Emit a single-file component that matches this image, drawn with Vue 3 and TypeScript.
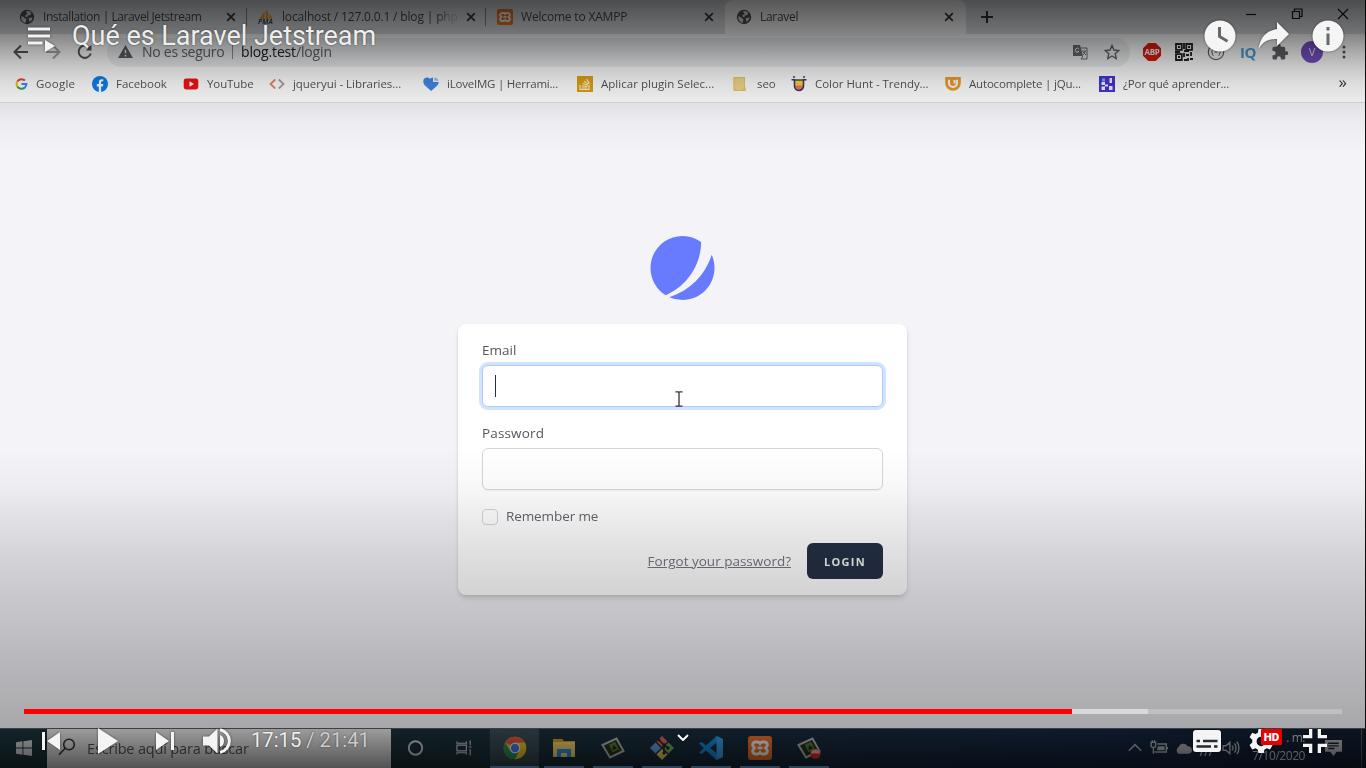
<script setup lang="ts">
interface Tab { icon: string; title: string; active?: boolean; spacing: string; badge?: string }
interface Bookmark { icon: string; label: string; spacing: string }
interface Extension { icon: string; text?: string }

const tabs: Tab[] = [
  { icon: 'globe', title: 'Installation | Laravel Jetstream', spacing: '-0.42px' },
  { icon: 'pma', title: 'localhost / 127.0.0.1 / blog | php', spacing: '-0.16px', badge: 'PMA' },
  { icon: 'xampp', title: 'Welcome to XAMPP', spacing: '-0.18px' },
  { icon: 'globe', title: 'Laravel', active: true, spacing: '-0.3px' },
]

const bookmarks: Bookmark[] = [
  { icon: 'google', label: 'Google', spacing: '0.25px' },
  { icon: 'facebook', label: 'Facebook', spacing: '-0.05px' },
  { icon: 'youtube', label: 'YouTube', spacing: '-0.1px' },
  { icon: 'code', label: 'jqueryui - Libraries...', spacing: '-0.04px' },
  { icon: 'heart', label: 'iLoveIMG | Herrami...', spacing: '-0.22px' },
  { icon: 'stack', label: 'Aplicar plugin Selec...', spacing: '0.03px' },
  { icon: 'folder', label: 'seo', spacing: '-0.1px' },
  { icon: 'hunt', label: 'Color Hunt - Trendy...', spacing: '-0.04px' },
  { icon: 'cup', label: 'Autocomplete | jQu...', spacing: '-0.18px' },
  { icon: 'hack', label: '¿Por qué aprender...', spacing: '-0.14px' },
]

const extensions: Extension[] = [
  { icon: 'abp', text: 'ABP' },
  { icon: 'qr' },
  { icon: 'json' },
  { icon: 'iq', text: 'IQ' },
  { icon: 'puzzle' },
  { icon: 'avatar', text: 'V' },
  { icon: 'dots' },
]
const apps: string[] = ['chrome', 'explorer', 'camtasia', 'git', 'vscode', 'xampp', 'recorder']

const played = 1048
const loaded = 1124
</script>

<template>
  <svg class="sprite" aria-hidden="true">
    <symbol id="globe" viewBox="0 0 16 16">
      <circle cx="8" cy="8" r="7.200" fill="#4d5156" />
      <path d="M2.200 7.200c1.800.2 3 .9 3.400 2.100 1.600 0 2 .9 1.600 2.200l-.8 2.400C3.800 13.200 2 10.800 2.200 7.200zM7 2.200c1.800-.6 4.200.1 5.400 1.600l-1 2.300-2.400.4-.6 1.700-2.300-.6.3-1.700 2-.7z" fill="#dcdee2" />
      <path d="M9.500 9.200l3.900-1-.7 3-2.200 1.500z" fill="#dcdee2" />
    </symbol>
    <symbol id="pma" viewBox="0 0 16 16">
      <path d="M1.500 10L6.500 2.500V10zM7.500 10l.5-9.500c2 2 3 5.500 2.500 9.500zM11.500 10V5c1.500 1 2.500 3 2.500 5z" fill="#f59a22" />
    </symbol>
    <symbol id="xampp" viewBox="0 0 24 24">
      <rect width="24" height="24" rx="3" fill="#f4752b" />
      <path d="M7.500 6h2.200c1 0 1.700.7 2.300 1.500.6-.8 1.300-1.500 2.300-1.500h2.200a2.800 2.800 0 0 1 2.300 4.400l-1.300 1.600 1.300 1.600a2.800 2.800 0 0 1-2.300 4.400h-2.200c-1 0-1.700-.7-2.300-1.500-.6.8-1.300 1.500-2.300 1.500H7.500a2.800 2.800 0 0 1-2.300-4.400L6.500 12l-1.300-1.600A2.800 2.800 0 0 1 7.500 6z" fill="none" stroke="#fff" stroke-width="2.900" />
      <path d="M9.500 12h5" stroke="#fff" stroke-width="2.600" />
    </symbol>
    <symbol id="google" viewBox="0 0 16 16">
      <g fill="none" stroke-width="2.500">
        <path d="M3 4.800A6 6 0 0 1 12.200 3.700" stroke="#e94335" />
        <path d="M3.100 11.400a6 6 0 0 1 0-6.800" stroke="#fbbc05" />
        <path d="M12.100 12.400A6 6 0 0 1 3 11.200" stroke="#34a853" />
        <path d="M8 8h6a6 6 0 0 1-2.100 4.600" stroke="#4285f4" />
      </g>
    </symbol>
    <symbol id="facebook" viewBox="0 0 16 16">
      <circle cx="8" cy="8" r="8" fill="#0b7fee" />
      <path d="M6.800 16v-5.500h-2V8.100h2V6.400c0-2.100 1.200-3.200 3-3.200.8 0 1.500.1 1.500.1v2h-.9c-1 0-1.300.6-1.300 1.200v1.600h2.200l-.4 2.400H9.100V16z" fill="#fff" />
    </symbol>
    <symbol id="youtube" viewBox="0 0 16 16">
      <rect x=".7" y="2.500" width="14.600" height="11" rx="2.400" fill="#f31313" />
      <path d="M6.500 5.300v5.400L11 8z" fill="#fff" />
    </symbol>
    <symbol id="code" viewBox="0 0 16 16">
      <g fill="none" stroke-width="1.800"><path d="M6.200 3.500L1.500 8l4.700 4.500" stroke="#e58768" /><path d="M9.800 3.500L14.500 8l-4.700 4.500" stroke="#a9a4a2" /></g>
    </symbol>
    <symbol id="heart" viewBox="0 0 16 16">
      <path d="M.3 5C.3 1.500 4.500.2 7 2.800c1-.9 1.800-1.300 3-1.400v4.500h5.700c-.2 2.200-1.300 3.500-2.600 4.600L8.200 15 2.500 10C1 8.600.3 7 .3 5z" fill="#4187ea" />
      <path d="M11.300 1.500c2.200.2 3.800 1.400 4.100 3.300h-4.100z" fill="#9cbff5" />
    </symbol>
    <symbol id="stack" viewBox="0 0 16 16">
      <rect width="16" height="16" fill="#dda211" />
      <path d="M3 9v4.500h9V9M4.800 12h5.500M4.900 9.900l5.500.6M5.500 7.500l5.300 1.700M7 5.200l4.400 3.100M9.500 3.200l3 4.500" fill="none" stroke="#fff3cf" stroke-width="1.200" />
    </symbol>
    <symbol id="folder" viewBox="0 0 16 16">
      <path d="M.5 1h11v10l1 .5V15H.5z" fill="#efd88a" /><path d="M10.500 11.500h2V15h-2z" fill="#e9bd49" /><path d="M1 1.500h10.500V14.500H1z" fill="none" stroke="#e9c661" />
    </symbol>
    <symbol id="hunt" viewBox="0 0 16 16">
      <path d="M3 4h10v5.500a5 5 0 0 1-10 0z" fill="#f6d72f" /><path d="M3.500 9.500h9L11 14H5z" fill="#f27368" />
      <path d="M.5 3.800h3V10a4.500 4.500 0 0 0 9 0V3.800h3" fill="none" stroke="#403b5b" stroke-width="1.600" />
      <path d="M3 4h10" stroke="#403b5b" stroke-width="1.400" />
      <circle cx="3" cy="1" r="1" fill="#403b5b" /><circle cx="13" cy="1" r="1" fill="#403b5b" />
    </symbol>
    <symbol id="cup" viewBox="0 0 16 16">
      <path d="M.2 1h15.600v6a7.800 7.800 0 0 1-15.600 0z" fill="#ee9b2d" />
      <path d="M4 3.800V7a4 4 0 0 0 8 0V3.800" fill="none" stroke="#fff" stroke-width="2" />
      <path d="M8.500 4h2v3.500h-2z" fill="#fff" />
    </symbol>
    <symbol id="hack" viewBox="0 0 16 16">
      <path d="M0 0h16v16H0z" fill="#4a32d4" />
      <path d="M2.500 6h3.500v3H2.500zM2.500 10.500H6V14H2.500zM10.500 2H13v5h-2.500zM6 8.500h3v2H6zM10 10h3.500v4H10z" fill="#f2f1ff" /><path d="M3 2.500h3v3H3z" fill="#60bedb" />
    </symbol>
    <symbol id="abp" viewBox="0 0 18 18"><path d="M5.300 0h7.400L18 5.300v7.400L12.700 18H5.300L0 12.700V5.300z" fill="#dc1c13" /></symbol>
    <symbol id="qr" viewBox="0 0 18 18">
      <g fill="none" stroke="#202124" stroke-width="1.800"><path d="M1 1h5.800v5.800H1zM11.200 1H17v5.800h-5.800zM1 11.200h5.800V17H1z" /><path d="M9 0v6M9 8h5M0 9h5M9 10v4M11 12h3M16 9v4M9 17h3M13 15v3M15 16h3" /></g>
      <path d="M3 3h2v2H3zM13 3h2v2h-2zM3 13h2v2H3z" fill="#202124" />
    </symbol>
    <symbol id="json" viewBox="0 0 18 18">
      <circle cx="9" cy="9" r="7.700" fill="none" stroke="#5f6368" stroke-width="1.200" /><path d="M6.500 5.500c-2 0-.4 2.500-2 3.500 1.600 1 0 3.500 2 3.500M11.500 5.500c2 0 .4 2.500 2 3.500-1.600 1 0 3.500-2 3.500M7.500 9h3" fill="none" stroke="#5f6368" />
    </symbol>
    <symbol id="puzzle" viewBox="0 0 24 24">
      <path d="M20.500 11H19V7a2 2 0 0 0-2-2h-4V3.500a2.500 2.500 0 0 0-5 0V5H4a2 2 0 0 0-2 2v3.800h1.500a2.700 2.700 0 0 1 0 5.400H2V20c0 1.100.9 2 2 2h3.800v-1.500a2.700 2.700 0 0 1 5.400 0V22H17a2 2 0 0 0 2-2v-4h1.500a2.500 2.500 0 0 0 0-5z" fill="#5f6368" />
    </symbol>
    <symbol id="avatar" viewBox="0 0 18 18"><circle cx="9" cy="9" r="9" fill="#764fc2" /></symbol>
    <symbol id="dots" viewBox="0 0 18 18"><g fill="#55585c"><circle cx="9" cy="4" r="1.500" /><circle cx="9" cy="9" r="1.500" /><circle cx="9" cy="14" r="1.500" /></g></symbol>
    <symbol id="chrome" viewBox="0 0 24 24">
      <circle cx="12" cy="12" r="11.300" fill="#f7c92e" />
      <path d="M12 12L2.200 6.300A11.300 11.300 0 0 1 21.800 6.500H12z" fill="#ed5546" /><path d="M2.200 6.300l5 8.500L12 17l-.5 6.300A11.300 11.300 0 0 1 2.200 6.300z" fill="#249a58" />
      <path d="M7 14.500l5 2 4-1.300-4 8.100h-1z" fill="#249a58" /><circle cx="12" cy="12" r="5.300" fill="#fff" /><circle cx="12" cy="12" r="4.200" fill="#4383ed" />
    </symbol>
    <symbol id="explorer" viewBox="0 0 24 24">
      <path d="M1 3h9l2 2h11v16H1z" fill="#d9a322" /><path d="M1 6h22v15H1z" fill="#ffdc70" /><path d="M5 13h14v8h-4v-4H9v4H5z" fill="#3695df" />
    </symbol>
    <symbol id="camtasia" viewBox="0 0 24 24">
      <path d="M1.500 9L15.500 2.500l7 12.500L9 21.500z" fill="#26331c" stroke="#bcbcbc" stroke-width="2" /><path d="M8 8.500l6-2.700 4 7.500-6.500 3z" fill="#607d3a" /><path d="M12 9l4 3-4.500 2.500z" fill="#1e2818" />
    </symbol>
    <symbol id="git" viewBox="0 0 24 24">
      <path d="M12 0l5.500 5.500L12 11 6.500 5.500z" fill="#e86657" /><path d="M5.500 6.500L11 12l-5.500 5.500L0 12z" fill="#6ca4e7" /><path d="M18.500 6.500L24 12l-5.500 5.500L13 12z" fill="#78b957" /><path d="M12 13l5.500 5.500L12 24l-5.500-5.500z" fill="#f1d066" />
      <path d="M9 4l5 5v8M14 9l4 3" fill="none" stroke="#242b32" stroke-width="1.600" /><g fill="#242b32"><circle cx="9" cy="4" r="1.600" /><circle cx="14" cy="9" r="1.700" /><circle cx="18" cy="12" r="1.700" /><circle cx="14" cy="17" r="1.700" /></g>
    </symbol>
    <symbol id="vscode" viewBox="0 0 24 24">
      <path d="M17.500 0L24 3v18l-6.500 3L7 14.500 2.500 18 0 16.500 4.800 12 0 7.500 2.500 6 7 9.500zM18 6.500L11 12l7 5.500z" fill="#168ce0" fill-rule="evenodd" /><path d="M17.500 0L24 3v18l-6.500 3z" fill="#36a5ed" />
    </symbol>
    <symbol id="recorder" viewBox="0 0 24 24"><use href="#camtasia" /><circle cx="18.500" cy="18" r="5" fill="#ef2c25" /><path d="M13.600 17.500a5 5 0 0 1 9.800 0z" fill="#f5b6ad" /></symbol>
  </svg>

  <main class="screen">
    <section class="desktop">
      <header class="tabs">
        <div v-for="tab in tabs" :key="tab.title" class="tab" :class="{ active: tab.active }">
          <span class="tab-icon"><svg><use :href="'#' + tab.icon" /></svg><small v-if="tab.badge">{{ tab.badge }}</small></span>
          <span class="tab-title" :class="{ fade: tab.badge }" :style="{ letterSpacing: tab.spacing }">{{ tab.title }}</span>
          <svg class="close" viewBox="0 0 10 10"><path d="M1.200 1.200l7.600 7.600m0-7.600L1.200 8.800" /></svg>
        </div>
        <svg class="plus" viewBox="0 0 12 12"><path d="M6 0v12M0 6h12" /></svg>
        <div class="window-controls">
          <svg viewBox="0 0 12 12"><path d="M1 6.500h10" /></svg>
          <svg viewBox="0 0 12 12"><path d="M1.500 3.500h7v7h-7zM3.500 3V1h7.500v7.500H9" /></svg>
          <svg viewBox="0 0 12 12"><path d="M1 1l10 10m0-10L1 11" /></svg>
        </div>
      </header>

      <div class="toolbar">
        <nav class="nav">
          <svg viewBox="0 0 16 16"><path d="M15 8H2M8 1.500L1.500 8 8 14.500" /></svg>
          <svg class="dim" viewBox="0 0 16 16"><path d="M1 8h13M8 1.500L14.500 8 8 14.500" /></svg>
          <svg viewBox="0 0 16 16"><path d="M13.800 9.500A6.200 6.200 0 1 1 12.500 3.500" /><path d="M14.500.8v5.700H8.800z" class="solid" /></svg>
        </nav>
        <div class="address">
          <svg class="warn" viewBox="0 0 16 14"><path d="M8 0l8 14H0z" fill="#5a5e62" /><path d="M8 5v4M8 10.500v1.800" stroke="#eee" stroke-width="1.500" /></svg>
          <span class="unsafe">No es seguro</span><i /><span class="url">blog.test<em>/login</em></span>
          <svg class="translate" viewBox="0 0 16 16"><path d="M1 1h7l3 11H1z" fill="#66696c" /><path d="M8.500 4H15v11H9l2-3" fill="none" stroke="#66696c" /><path d="M6.800 5a2 2 0 1 0 0 2.500H5.300" stroke="#eee" fill="none" /><path d="M10 7h4M13 7c0 2-1 3-2 4M11 8l3 3" stroke="#66696c" fill="none" /></svg>
          <svg class="star" viewBox="0 0 16 16"><path d="M8 1.500l2 4.500 4.800.5-3.600 3.300 1 4.700L8 12l-4.200 2.500 1-4.700L1.200 6.500 6 6z" /></svg>
        </div>
        <div class="extensions">
          <span v-for="item in extensions" :key="item.icon" :class="item.icon"><svg><use :href="'#' + item.icon" /></svg><small v-if="item.text">{{ item.text }}</small></span>
        </div>
      </div>

      <nav class="bookmarks">
        <span v-for="item in bookmarks" :key="item.label" class="bookmark">
          <svg><use :href="'#' + item.icon" /></svg><b :style="{ letterSpacing: item.spacing }">{{ item.label }}</b>
        </span>
        <span class="more">»</span>
      </nav>

      <div class="page">
        <svg class="logo" viewBox="0 0 48 48"><path d="M11.395 44.428C4.557 40.198 0 32.632 0 24 0 10.745 10.745 0 24 0a23.891 23.891 0 0113.997 4.502c-.2 17.907-11.097 33.245-26.602 39.926z" /><path d="M14.134 45.885A23.914 23.914 0 0024 48c13.255 0 24-10.745 24-24 0-3.516-.756-6.856-2.115-9.866-4.659 15.143-16.608 27.092-31.75 31.751z" /></svg>
        <form class="card" @submit.prevent>
          <label>Email</label>
          <div class="field focused"><span class="caret" />
            <svg class="pointer" viewBox="0 0 8 16"><path d="M.5.8h2.700L4 1.500 4.800.8h2.700M4 1.500v13M.5 15.200h2.700l.8-.7.8.7h2.700" /></svg>
          </div>
          <label class="second">Password</label>
          <div class="field" />
          <div class="remember"><span class="box" /><span>Remember me</span></div>
          <div class="actions"><a>Forgot your password?</a><button>LOGIN</button></div>
        </form>
      </div>

      <footer class="taskbar">
        <div class="start"><svg viewBox="0 0 16 16"><path d="M0 2.200l6.500-.9v6.200H0zM7.400 1.200L16 0v7.500H7.400zM0 8.400h6.500v6.300L0 13.800zM7.400 8.400H16V16l-8.600-1.200z" /></svg></div>
        <div class="search"><svg viewBox="0 0 18 18"><circle cx="11" cy="6.500" r="5.300" /><path d="M7.200 10.300L1 16.800" /></svg><span>Escribe aquí para buscar</span></div>
        <div class="system"><svg viewBox="0 0 16 16"><circle cx="8" cy="8" r="6.700" stroke-width="1.900" /></svg></div>
        <div class="system"><svg viewBox="0 0 18 16"><path d="M1 1v2h10V1M1 15v-2h10v2M1 5h10v6H1zM15 0v5M15 9v7M13.500 7h3" stroke-width="1.200" /></svg></div>
        <div class="apps"><div v-for="app in apps" :key="app" class="app" :class="app"><svg><use :href="'#' + app" /></svg></div></div>
        <div class="tray">
          <svg viewBox="0 0 16 16"><path d="M2.500 10.500L8 5l5.500 5.500" /></svg>
          <svg viewBox="0 0 16 16"><path d="M6.500 4.500h8v7H4M1 3v3c0 2 4 2 4 0V3zM2 1v2M4 1v2M3 8v5M15.500 7v2" /><path d="M7 6.500h6v3.500H6z" fill="#aeb2b5" stroke="none" /></svg>
          <svg viewBox="0 0 16 16"><path d="M4 13a3.500 3.500 0 0 1 0-6 4.500 4.500 0 0 1 8-.5c3 0 4 2 4 3.500s-1 3-3 3z" fill="#aeb2b5" stroke="none" /></svg>
          <svg viewBox="0 0 16 16"><path d="M2 15l2-5M6 15l2-5M10 15l2-5" /></svg>
          <svg viewBox="0 0 16 16"><path d="M1 6h2.500L7 3v10l-3.500-3H1zM9 6c1 1 1 3 0 4M11 4c2 2 2 6 0 8M13.200 2.500c2.500 3 2.500 8 0 11" /></svg>
          <div class="clock"><span>. m.</span><span>7/10/2020</span></div>
          <svg class="note" viewBox="0 0 16 16"><path d="M0 1h16v11H11l-3 4-3-4H0z" fill="#b8babc" stroke="none" /><path d="M3 4h10M3 6.500h10M3 9h6" stroke="#1a222d" /></svg>
          <span class="peek" />
        </div>
      </footer>
    </section>

    <section class="player">
      <div class="player-top">
        <svg class="playlist" viewBox="0 0 27 24"><path d="M0 0h22v3H0zM0 7h22v3H0zM0 14h14.500v3H0zM17 12.500l10 6-10 6z" /></svg>
        <h1>Qué es Laravel Jetstream</h1>
        <div class="player-actions">
          <svg viewBox="0 0 32 32"><circle cx="16" cy="16" r="15.500" /><path d="M15.500 7v9.500l8 4.800" class="cut" /></svg>
          <svg viewBox="0 0 32 32"><path d="M19 2l12 12-12 12v-7C10 18.500 4.500 22 .5 29 2 18 8 10.500 19 9z" /></svg>
          <svg viewBox="0 0 32 32"><circle cx="16" cy="16" r="15.500" /><path d="M16 7v3.500M16 13.500V25" class="cut" /></svg>
        </div>
      </div>
      <div class="player-bottom">
        <div class="progress"><div class="loaded" :style="{ width: loaded + 'px' }" /><div class="played" :style="{ width: played + 'px' }" /></div>
        <div class="controls">
          <svg class="skip" viewBox="0 0 18 18"><path d="M0 0h3v18H0zM18 0v18L5 9z" /></svg>
          <svg class="play" viewBox="0 0 20 26"><path d="M0 0l20 13L0 26z" /></svg>
          <svg class="skip next" viewBox="0 0 18 18"><path d="M15 0h3v18h-3zM0 0v18l13-9z" /></svg>
          <svg class="volume" viewBox="0 0 28 26"><path d="M0 8.500h6L14.500.5v25L6 17.500H0zM17 7a6.500 6.500 0 0 1 0 12z" /><path d="M17 1.700a11.500 11.500 0 0 1 0 22.600" fill="none" stroke="#f4f4f4" stroke-width="3" /></svg>
          <span class="time">17:15 <em>/ 21:41</em></span>
          <svg class="chevron" viewBox="0 0 12 7"><path d="M1 1l5 5 5-5" /></svg>
          <div class="right-controls">
            <svg class="cc" viewBox="0 0 28 22"><rect width="28" height="22" rx="3" /><path d="M3.500 11H7M10 11h14.500M3.500 16.500H18M21 16.500h3.500" stroke="#252a31" stroke-width="2.500" /></svg>
            <div class="gear"><svg viewBox="0 0 24 24"><path d="M9.500 0h5l.6 3.400 2.200 1.200 3.200-1.200 2.500 4.200-2.600 2.200v2.500l2.600 2.200-2.500 4.200-3.200-1.200-2.200 1.300-.6 3.400h-5l-.6-3.400-2.200-1.300-3.200 1.200L1 14.500l2.600-2.200V9.800L1 7.600l2.500-4.200 3.200 1.200 2.200-1.200zM12 7a4.300 4.300 0 1 0 0 8.600A4.300 4.300 0 0 0 12 7z" fill-rule="evenodd" transform="translate(-.5 0) scale(1.050 1.100)" /></svg><b>HD</b></div>
            <svg class="exit" viewBox="0 0 24 24"><path d="M6 0h3.300v9.300H0V6h6zM14.700 0H18v6h6v3.300h-9.300zM0 14.700h9.300V24H6v-6H0zM14.700 14.700H24V18h-6v6h-3.300z" /></svg>
          </div>
        </div>
      </div>
    </section>
  </main>
</template>

<style>
body { margin: 0; overflow: hidden; background: #111; }
</style>

<style scoped>
* { box-sizing: border-box; }
svg { display: block; flex: none; }
em { font-style: normal; }
.sprite { position: absolute; width: 0; height: 0; }
.screen { position: relative; width: 1366px; height: 768px; overflow: hidden; background: #111; font-family: "Open Sans", sans-serif; }
.desktop { width: 1365px; height: 768px; display: flex; flex-direction: column; }
.tabs > *, .toolbar > *, .bookmarks > *, .card > *, .taskbar > * { filter: blur(.3px); }
.tabs { height: 34px; display: flex; background: #dee1e6; padding-left: 8px; align-items: stretch; }
.tab { width: 239px; display: flex; align-items: center; padding: 0 11px 0 11px; position: relative; font-size: 12px; color: #45494e; }
.tab:nth-child(-n+2)::after { content: ""; position: absolute; right: 0; top: 8px; height: 18px; width: 1px; background: #85888d; }
.tab.active { width: 241px; padding-right: 12px; background: #fff; border-radius: 8px 8px 0 0; }
.tab-icon { position: relative; width: 16px; height: 16px; margin-right: 8px; }
.tab-icon svg { width: 16px; height: 16px; }
.tab-icon small { position: absolute; left: 0; top: 8px; font: italic 700 7px/9px "Open Sans", sans-serif; color: #454b67; }
.tab-title { flex: 1; white-space: nowrap; margin: -1px 8px 0 0; }
.fade { -webkit-mask-image: linear-gradient(90deg, #000 88%, #0003 97%); mask-image: linear-gradient(90deg, #000 88%, #0003 97%); }
.close { width: 10px; height: 10px; fill: none; stroke: #34373a; stroke-width: 1.7; }
.plus { width: 12px; height: 12px; margin: 11px 0 0 15px; stroke: #303338; stroke-width: 2; }
.window-controls { display: flex; gap: 34px; margin: 8px 16px 0 auto; }
.window-controls svg { width: 12px; height: 12px; fill: none; stroke: #151515; stroke-width: 1.2; }
.toolbar { height: 34px; display: flex; align-items: center; background: #fff; padding: 0 12px 0 13px; }
.nav { display: flex; gap: 16px; width: 94px; margin-top: 2px; }
.nav svg { width: 16px; height: 16px; stroke: #53575b; fill: none; stroke-width: 2; }
.nav .dim { opacity: .5; }
.nav .solid { fill: #53575b; stroke: none; }
.address { width: 1023px; height: 29px; margin-top: 2px; border-radius: 15px; background: #edeff1; display: flex; align-items: center; padding: 0 10px 1px 11px; font-size: 14px; color: #5f6368; }
.warn { width: 15px; height: 13px; margin-right: 9px; }
.unsafe { width: 82px; white-space: nowrap; letter-spacing: -.27px; }
.address i { width: 1px; height: 15px; background: #8c8f93; margin: 0 8px; }
.url { color: #202124; letter-spacing: -.15px; }
.url em { color: #5f6368; }
.translate { width: 16px; height: 16px; margin-left: auto; margin-right: 16px; }
.star { width: 16px; height: 16px; fill: none; stroke: #5f6368; stroke-width: 1.4; }
.extensions { display: flex; flex: 1; justify-content: space-between; margin: 1px 0 0 13px; align-items: center; }
.extensions span { width: 18px; height: 18px; display: grid; place-items: center; }
.extensions svg, .extensions small { grid-area: 1 / 1; width: 18px; height: 18px; }
.extensions small { line-height: 18px; text-align: center; white-space: nowrap; }
.extensions .abp small { font-size: 8px; font-weight: 700; color: #fff; letter-spacing: -.3px; }
.extensions .iq small { font-size: 15px; font-weight: 700; color: #4ea3df; letter-spacing: -.5px; }
.extensions .avatar svg { width: 22px; height: 22px; margin: -2px; justify-self: center; }
.extensions .avatar small { font-size: 11px; color: #efe8ff; }
.bookmarks { height: 35px; display: grid; grid-template-columns: 77px 91px 86px 154px 154px 156px 58px 154px 154px 1fr auto; background: #fff; padding: 0 18px 0 15px; border-bottom: 1px solid #dcdde5; font-size: 11.5px; color: #52565b; align-items: center; }
.bookmark { display: flex; align-items: center; white-space: nowrap; margin-top: -3px; }
.bookmark svg { width: 16px; height: 16px; margin-right: 8px; }
.bookmark:first-child svg { width: 13px; }
.bookmark b { font-weight: 400; }
.more { font-size: 17px; line-height: 20px; margin-top: -6px; color: #35383b; }
.page { flex: 1; display: flex; flex-direction: column; align-items: center; background: #f3f3f8; padding: 133px 0 0 0; }
.logo { width: 65px; height: 64px; fill: #687bff; }
.card { width: 449px; height: 271px; margin-top: 24px; padding: 16px 24px; background: #fff; border-radius: 8px; box-shadow: 0 4px 6px -1px #0002, 0 1px 3px #0001; color: #56565f; font-size: 13.5px; }
label { display: block; line-height: 21px; margin-bottom: 4px; }
.second { margin-top: 16px; letter-spacing: .15px; }
.field { position: relative; height: 42px; border: 1px solid #d3d6de; border-radius: 6px; background: #fff; box-shadow: 0 1px 2px #0000000d; padding: 10px 12px; }
.focused { border-color: #aacdfd; box-shadow: 0 0 0 3px #d3e3fc; }
.caret { display: block; width: 1px; height: 22px; margin-top: -1px; background: #252f3f; }
.pointer { position: absolute; left: 192px; top: 25px; width: 8px; height: 16px; fill: none; stroke: #333; stroke-width: 1.3; }
.remember { display: flex; height: 21px; align-items: center; gap: 8px; margin-top: 16px; color: #62666f; letter-spacing: -.1px; }
.remember span:last-child { margin-top: -1px; }
.box { width: 16px; height: 16px; border: 1px solid #d1d4dc; border-radius: 4px; background: #fff; }
.actions { display: flex; align-items: center; justify-content: flex-end; gap: 16px; margin-top: 16px; }
.actions a { color: #737780; text-decoration: underline; }
button { width: 76px; height: 36px; padding: 0; border: 0; border-radius: 6px; background: #253046; color: #f3f3f3; font: 700 11px "Open Sans", sans-serif; letter-spacing: 1.25px; }
.taskbar { height: 40px; display: flex; background: linear-gradient(90deg, #1b353e, #1a303b 40%, #152541 80%, #121e31); color: #b5b7ba; border-top: 1px solid #526068; }
.start { width: 47px; display: grid; place-items: center; }
.start svg { width: 16px; height: 16px; margin-top: -2px; fill: #d8dadd; }
.search { width: 344px; background: #e8e8e8; display: flex; align-items: center; padding-left: 11px; color: #555; font-size: 14.5px; letter-spacing: -.17px; }
.search svg { width: 18px; height: 18px; margin: -3px 11px 0 0; fill: none; stroke: #353535; stroke-width: 1.6; }
.system { width: 49px; display: grid; place-items: center; }
.system svg { width: 17px; height: 16px; margin-top: -2px; fill: none; stroke: #d7d7d7; }
.apps { display: flex; margin-left: 1px; }
.app { width: 49px; display: grid; place-items: center; position: relative; }
.app svg { width: 24px; height: 24px; margin-top: -2px; }
.app::after { content: ""; position: absolute; bottom: 0; left: 5px; right: 4px; height: 2px; background: #78b9f5; }
.app.chrome { width: 49px; background: #ffffff24; }
.app.chrome::after { left: 0; right: 0; }
.tray { display: flex; align-items: center; margin-left: auto; padding-right: 3px; }
.tray > svg { width: 18px; height: 18px; margin: -2px 6px 0 0; fill: none; stroke: #aeb2b5; stroke-width: 1.3; }
.clock { width: 59px; display: flex; flex-direction: column; align-items: flex-end; margin-top: -3px; line-height: 18px; font-size: 12px; letter-spacing: -.45px; color: #c9cbce; }
.tray .note { margin: -2px 19px 0 20px; width: 17px; height: 17px; }
.peek { align-self: stretch; width: 1px; background: #4b5563; }
.player { position: absolute; inset: 0; display: flex; flex-direction: column; justify-content: space-between; font-family: Roboto, sans-serif; background: linear-gradient(#000000a8 0, #0000007d 33px, #00000059 50px, #00000038 67px, #00000021 84px, #00000015 100px, #00000008 122px, transparent 150px, transparent 450px, #00000008 490px, #00000014 520px, #00000022 560px, #0000002c 595px, #0000003b 650px, #00000048 700px, #0000004f 727px, #00000075 745px, #000000a5 768px); }
.player-top { display: flex; height: 72px; padding: 20px 22px 0 28px; }
.playlist { width: 27px; height: 25px; margin-top: 7px; fill: #f4f4f4; filter: drop-shadow(0 0 1px #0008); }
h1 { margin: -1px 0 0 17px; font: 400 27px/34px Roboto, sans-serif; letter-spacing: -.02px; color: #eee; text-shadow: 0 0 2px #0008; white-space: nowrap; }
.player-actions { display: flex; gap: 22px; margin-left: auto; }
.player-actions svg { width: 32px; height: 32px; fill: #f5f5f5; filter: drop-shadow(0 0 1px #0008); }
.player-actions .cut { fill: none; stroke: #686868; stroke-width: 3; }
.player-bottom { height: 59px; padding: 0 24px; }
.progress { position: relative; height: 5px; background: #bfbfc0; }
.loaded, .played { position: absolute; left: 0; top: 0; height: 5px; }
.loaded { background: #d9d9da; }
.played { background: #f00; }
.controls { position: relative; height: 54px; display: flex; align-items: center; padding-left: 18px; }
.controls svg { fill: #f4f4f4; filter: drop-shadow(0 0 1px #0008); }
.skip { width: 18px; height: 18px; }
.play { width: 20px; height: 26px; margin-left: 38px; }
.next { margin-left: 38px; }
.volume { width: 28px; height: 26px; margin-left: 29px; }
.time { margin: -2px 0 0 20px; font-size: 20.2px; color: #eee; white-space: nowrap; text-shadow: 0 0 2px #0008; }
.time em { color: #ccc; }
.controls .chevron { position: absolute; left: 653px; top: 20px; width: 12px; height: 7px; fill: none; stroke: #fff; stroke-width: 2; }
.right-controls { display: flex; align-items: center; margin-left: auto; padding-right: 15px; }
.cc { width: 28px; height: 22px; }
.gear { width: 24px; height: 24px; margin-left: 28px; position: relative; }
.gear svg { width: 24px; height: 24px; }
.gear b { position: absolute; left: 12px; top: 0; width: 21px; height: 16px; background: #e70000; border-radius: 1px; font: 900 11.5px/16px Roboto, sans-serif; color: #fff; text-align: center; }
.exit { width: 24px; height: 24px; margin-left: 30px; }
</style>
